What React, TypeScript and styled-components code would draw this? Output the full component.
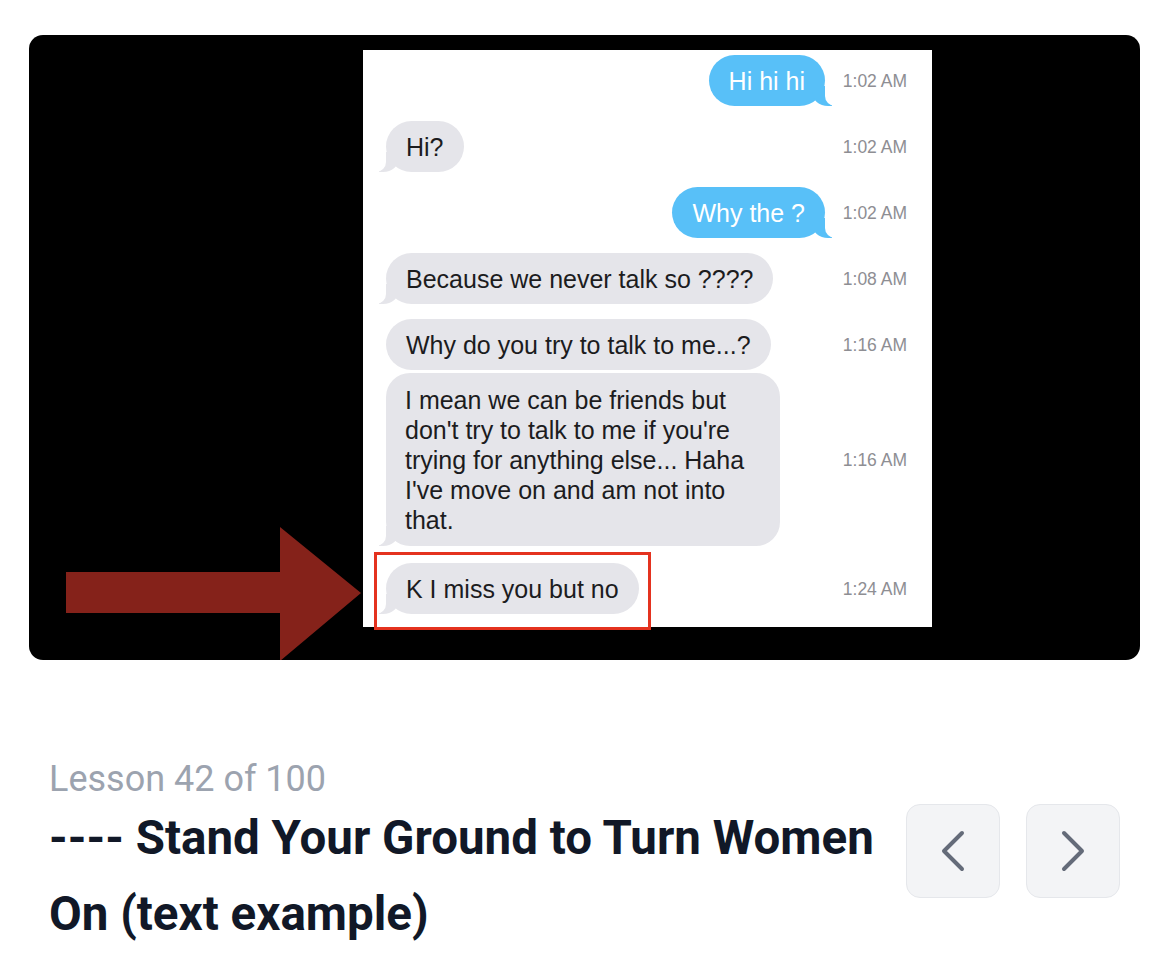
import React from "react";
import styled, { createGlobalStyle, css } from "styled-components";

const Global = createGlobalStyle`
  html, body { margin: 0; padding: 0; background: #ffffff; }
  body { font-family: Roboto, "Liberation Sans", Arial, sans-serif; }
`;

const Page = styled.div`
  width: 1170px;
  padding: 35px 30px 0 29px;
  box-sizing: border-box;
`;

const Video = styled.div`
  position: relative;
  height: 625px;
  background: #000;
  border-radius: 14px;
  overflow: hidden;
  display: flex;
  padding: 15px 0 0 334px;
  box-sizing: border-box;
`;

const Chat = styled.div`
  width: 569px;
  height: 577px;
  background: #fff;
  display: flex;
  flex-direction: column;
  gap: 15px;
  padding: 5px 25px 0 0;
  box-sizing: border-box;
  font-family: "Liberation Sans", Arial, sans-serif;
`;

const Row = styled.div<{ $shift?: number }>`
  display: grid;
  grid-template-columns: 1fr 66px;
  column-gap: 10px;
  align-items: center;
  padding-left: 23px;
  margin-top: ${(p) => p.$shift ?? 0}px;
`;

const Bubble = styled.div<{ $sent?: boolean; $tail?: boolean; $multi?: boolean }>`
  position: relative;
  justify-self: ${(p) => (p.$sent ? "end" : "start")};
  margin-right: ${(p) => (p.$sent ? "6px" : "0")};
  padding: ${(p) => (p.$multi ? "12px 36px 11px 19px" : "0 20px")};
  height: ${(p) => (p.$multi ? "auto" : "51px")};
  display: flex;
  align-items: center;
  border-radius: ${(p) => (p.$multi ? "24px" : "26px")};
  background: ${(p) => (p.$sent ? "#58c0f8" : "#e5e5ea")};
  color: ${(p) => (p.$sent ? "#ffffff" : "#1c1c1e")};
  font-size: 25px;
  line-height: 30px;
  white-space: nowrap;
  ${(p) =>
    p.$tail &&
    (p.$sent
      ? css`
          &::before {
            content: "";
            position: absolute;
            bottom: 0;
            right: -7px;
            width: 20px;
            height: 20px;
            background: #58c0f8;
            border-bottom-left-radius: 16px 14px;
          }
          &::after {
            content: "";
            position: absolute;
            bottom: 0;
            right: -10px;
            width: 10px;
            height: 20px;
            background: #fff;
            border-bottom-left-radius: 10px;
          }
        `
      : css`
          &::before {
            content: "";
            position: absolute;
            bottom: 0;
            left: -7px;
            width: 20px;
            height: 20px;
            background: #e5e5ea;
            border-bottom-right-radius: 16px 14px;
          }
          &::after {
            content: "";
            position: absolute;
            bottom: 0;
            left: -10px;
            width: 10px;
            height: 20px;
            background: #fff;
            border-bottom-right-radius: 10px;
          }
        `)}
`;

const Time = styled.span`
  text-align: right;
  font-size: 17.5px;
  color: #8e8e93;
  white-space: nowrap;
  padding-top: 2px;
`;

const Arrow = styled.svg`
  position: absolute;
  left: 37px;
  top: 492px;
`;

const Highlight = styled.div`
  position: absolute;
  left: 345px;
  top: 517px;
  width: 277px;
  height: 78px;
  border: 3px solid #e4321f;
  box-sizing: border-box;
`;

const Info = styled.div`
  display: flex;
  align-items: flex-start;
  gap: 26px;
  padding: 98px 20px 0 20px;
`;

const Texts = styled.div`
  flex: 1;
`;

const Counter = styled.div`
  font-size: 36px;
  line-height: 42px;
  color: #9ca3af;
`;

const Title = styled.h1`
  margin: 0;
  font-size: 47.5px;
  line-height: 76px;
  font-weight: 700;
  color: #111827;
`;

const Nav = styled.div`
  display: flex;
  gap: 26px;
  padding-top: 46px;
`;

const NavButton = styled.button`
  width: 94px;
  height: 94px;
  border-radius: 14px;
  border: 1.5px solid #e5e7eb;
  background: #f3f4f6;
  display: flex;
  align-items: center;
  justify-content: center;
  padding: 0;
  color: #646b79;
  cursor: pointer;
`;

const Chevron = ({ dir }: { dir: "left" | "right" }) => (
  <svg width="26" height="42" viewBox="0 0 26 42" fill="none" stroke="currentColor" strokeWidth="4" strokeLinecap="round" strokeLinejoin="round">
    {dir === "left" ? <path d="M22 3 L4 21 L22 39" /> : <path d="M4 3 L22 21 L4 39" />}
  </svg>
);

export default function App() {
  return (
    <>
      <Global />
      <Page>
        <Video>
          <Chat>
            <Row>
              <Bubble $sent $tail>Hi hi hi</Bubble>
              <Time>1:02 AM</Time>
            </Row>
            <Row>
              <Bubble $tail>Hi?</Bubble>
              <Time>1:02 AM</Time>
            </Row>
            <Row>
              <Bubble $sent $tail>Why the ?</Bubble>
              <Time>1:02 AM</Time>
            </Row>
            <Row>
              <Bubble $tail>Because we never talk so ????</Bubble>
              <Time>1:08 AM</Time>
            </Row>
            <Row>
              <Bubble>Why do you try to talk to me...?</Bubble>
              <Time>1:16 AM</Time>
            </Row>
            <Row $shift={-12}>
              <Bubble $tail $multi>
                I mean we can be friends but
                <br />
                don't try to talk to me if you're
                <br />
                trying for anything else... Haha
                <br />
                I've move on and am not into
                <br />
                that.
              </Bubble>
              <Time>1:16 AM</Time>
            </Row>
            <Row $shift={2}>
              <Bubble $tail>K I miss you but no</Bubble>
              <Time>1:24 AM</Time>
            </Row>
          </Chat>
          <Highlight />
          <Arrow width="296" height="134" viewBox="0 0 296 134">
            <polygon points="0,45 214,45 214,0 295,66 214,134 214,86 0,86" fill="#85221a" />
          </Arrow>
        </Video>
        <Info>
          <Texts>
            <Counter>Lesson 42 of 100</Counter>
            <Title>---- Stand Your Ground to Turn Women On (text example)</Title>
          </Texts>
          <Nav>
            <NavButton aria-label="Previous">
              <Chevron dir="left" />
            </NavButton>
            <NavButton aria-label="Next">
              <Chevron dir="right" />
            </NavButton>
          </Nav>
        </Info>
      </Page>
    </>
  );
}
